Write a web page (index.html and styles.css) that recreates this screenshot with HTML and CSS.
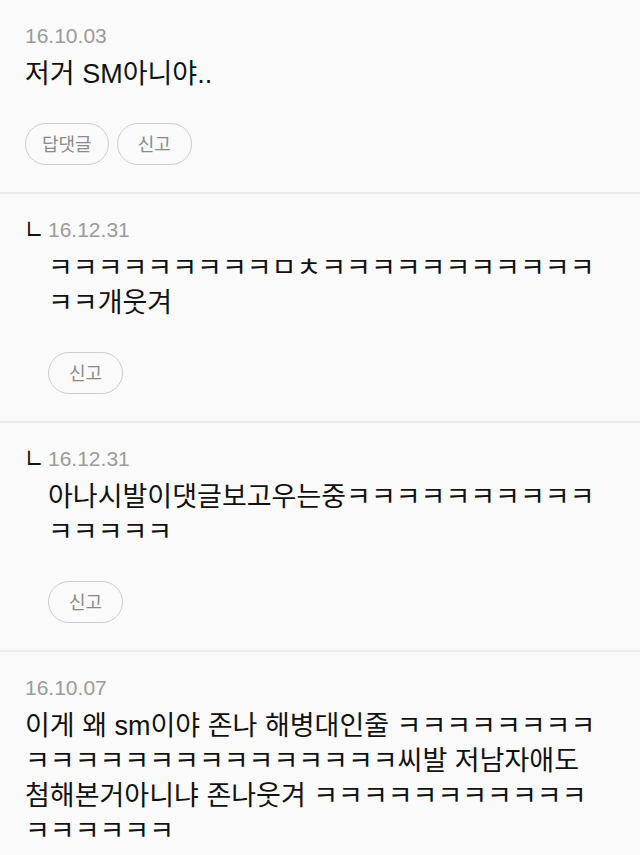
FILE: index.html
```html
<!DOCTYPE html>
<html lang="ko">

<head>
    <meta charset="UTF-8">
    <meta name="viewport" content="width=device-width, initial-scale=1.0">
    <title>댓글</title>

    <link rel="stylesheet" href="styles.css">
</head>

<body>
    <div class="commentList">
        <div class="comment">
            <div class="commentBody">
                <div class="commentDate">16.10.03</div>
                <p class="commentText">저거 SM아니야..</p>
                <div class="commentActions">
                    <span class="btn">답댓글</span>
                    <span class="btn">신고</span>
                </div>
            </div>
        </div>

        <div class="comment reply">
            <span class="replyMark">ㄴ</span>
            <div class="commentBody">
                <div class="commentDate">16.12.31</div>
                <p class="commentText">ㅋㅋㅋㅋㅋㅋㅋㅋㅋㅁㅊㅋㅋㅋㅋㅋㅋㅋㅋㅋㅋㅋㅋㅋ개웃겨</p>
                <div class="commentActions">
                    <span class="btn">신고</span>
                </div>
            </div>
        </div>

        <div class="comment reply">
            <span class="replyMark">ㄴ</span>
            <div class="commentBody">
                <div class="commentDate">16.12.31</div>
                <p class="commentText">아나시발이댓글보고우는중ㅋㅋㅋㅋㅋㅋㅋㅋㅋㅋㅋㅋㅋㅋㅋ</p>
                <div class="commentActions">
                    <span class="btn">신고</span>
                </div>
            </div>
        </div>

        <div class="comment">
            <div class="commentBody">
                <div class="commentDate">16.10.07</div>
                <p class="commentText">이게 왜 sm이야 존나 해병대인줄 ㅋㅋㅋㅋㅋㅋㅋㅋㅋㅋㅋㅋㅋㅋㅋㅋㅋㅋㅋㅋㅋㅋㅋ씨발 저남자애도 첨해본거아니냐 존나웃겨 ㅋㅋㅋㅋㅋㅋㅋㅋㅋㅋㅋㅋㅋㅋㅋㅋㅋ</p>
                <div class="commentActions">
                    <span class="btn">답댓글</span>
                    <span class="btn">신고</span>
                </div>
            </div>
        </div>
    </div>
</body>

</html>
```

FILE: styles.css
```css
* {
    box-sizing: border-box;
}

body {
    margin: 0;
    background-color: #fafafa;
    font-family: "Liberation Sans", "Noto Sans CJK KR", sans-serif;
    color: #111;
}

/* list is scrolled a little, first divider sits just above the top */
.commentList {
    width: 100%;
    margin-top: -2px;
}

.comment {
    display: flex;
    border-top: 2px solid #ececec;
    padding: 23px 36px 27px 25px;
}

.commentBody {
    flex: 1;
    min-width: 0;
}

.replyMark {
    width: 23px;
    flex-shrink: 0;
    align-self: flex-start;
    font-family: "Noto Sans CJK KR", sans-serif;
    font-size: 22px;
    line-height: 26px;
    color: #111;
    transform: translate(-1px, -4px) scaleY(1.35);
}

.commentDate {
    font-size: 21px;
    line-height: 26px;
    color: #9b9b9b;
    margin-bottom: 8px;
}

.commentText {
    margin: 0;
    font-size: 27px;
    line-height: 35px;
}

.commentActions {
    display: flex;
    gap: 8px;
    margin-top: 31px;
}

.btn {
    height: 42px;
    min-width: 75px;
    padding: 0 16px;
    border: 1.5px solid #cdcdcd;
    border-radius: 21px;
    font-family: "Noto Sans CJK KR", sans-serif;
    font-size: 18px;
    line-height: 39px;
    text-align: center;
    color: #8a8a8a;
}
```
